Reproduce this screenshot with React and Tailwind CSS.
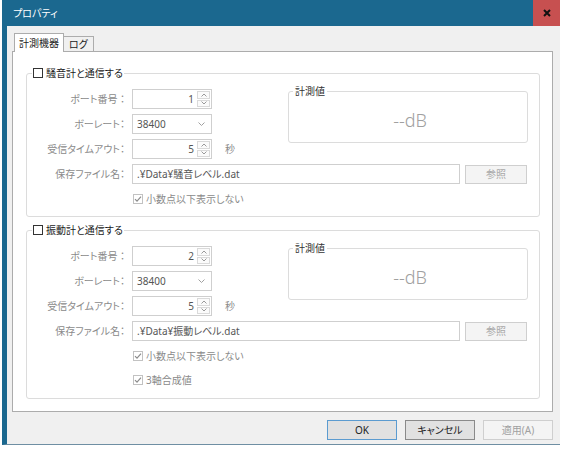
import React from 'react';

const Check = ({ checked, disabled }) => (
  <span
    className={
      'inline-flex w-[10px] h-[10px] items-center justify-center bg-white border ' +
      (disabled ? 'border-[#c2c2c2]' : 'border-[#333333]')
    }
  >
    {checked && (
      <svg width="8" height="8" viewBox="0 0 8 8">
        <polyline points="1,4.2 3,6.2 7,1.6" fill="none" stroke="#8c8c8c" strokeWidth="1.2" />
      </svg>
    )}
  </span>
);

const Label = ({ children }) => (
  <span className="w-[98px] text-right text-[#8a8a8a] whitespace-nowrap">{children}</span>
);

const Spin = ({ value }) => (
  <div className="flex w-[80px] h-[20px] border border-[#cfcfcf] bg-white">
    <span className="flex-1 flex items-center justify-end pr-[3px] text-[#555]">{value}</span>
    <div className="w-[14px] flex flex-col gap-px py-px pr-px">
      <div className="flex-1 flex items-center justify-center border border-[#dadada] bg-[#fbfbfb]">
        <svg width="6" height="4" viewBox="0 0 6 4">
          <polyline points="0.5,3.5 3,1 5.5,3.5" fill="none" stroke="#9a9a9a" strokeWidth="1" />
        </svg>
      </div>
      <div className="flex-1 flex items-center justify-center border border-[#dadada] bg-[#fbfbfb]">
        <svg width="6" height="4" viewBox="0 0 6 4">
          <polyline points="0.5,0.5 3,3 5.5,0.5" fill="none" stroke="#9a9a9a" strokeWidth="1" />
        </svg>
      </div>
    </div>
  </div>
);

const Combo = ({ value }) => (
  <div className="flex items-center justify-between w-[80px] h-[20px] border border-[#cfcfcf] bg-white pl-[4px] pr-[6px] text-[#555]">
    <span>{value}</span>
    <svg width="7" height="4" viewBox="0 0 7 4">
      <polyline points="0.5,0.5 3.5,3.5 6.5,0.5" fill="none" stroke="#a0a0a0" strokeWidth="1" />
    </svg>
  </div>
);

// 計測器ごとのグループ枠
const DeviceGroup = ({ title, port, file, extraChecks, className }) => (
  <fieldset className={'border border-[#dcdcdc] rounded-[3px] pt-[3px] px-0 min-w-0 ' + className}>
    <legend className="ml-[5px] px-[1px] leading-[14px]">
      <span className="inline-flex items-center gap-[3px] h-[14px]">
        <Check />
        <span className="text-[#1a1a1a]">{title}</span>
      </span>
    </legend>

    <div className="flex items-start">
      <div className="flex flex-col gap-[5px] pt-[5px]">
        <div className="flex items-center gap-[7px]">
          <Label>ポート番号 ：</Label>
          <Spin value={port} />
        </div>
        <div className="flex items-center gap-[7px]">
          <Label>ボーレート：</Label>
          <Combo value="38400" />
        </div>
        <div className="flex items-center gap-[7px]">
          <Label>受信タイムアウト：</Label>
          <Spin value="5" />
          <span className="ml-[6px] text-[#8a8a8a]">秒</span>
        </div>
      </div>

      <fieldset className="ml-auto mr-[11px] w-[240px] border border-[#dcdcdc] rounded-[3px] px-0 min-w-0">
        <legend className="ml-[4px] px-[2px] leading-[14px] text-[#333]">計測値</legend>
        <div className="h-[44px] flex items-center justify-center pl-[4px] text-[18px] font-light text-[#a0a0a0]">
          --dB
        </div>
      </fieldset>
    </div>

    <div className="mt-[5px] flex items-center gap-[7px]">
      <Label>保存ファイル名：</Label>
      <div className="w-[328px] h-[20px] flex items-center border border-[#cfcfcf] bg-white pl-[4px] text-[#555]">
        {file}
      </div>
      <button className="ml-[-2px] w-[62px] h-[19px] border border-[#cfcfcf] bg-[#f4f4f4] text-[#a8a8a8]">
        参照
      </button>
    </div>

    <div className="flex flex-col gap-[10px] mt-[8px] ml-[106px]">
      {['小数点以下表示しない', ...extraChecks].map((t) => (
        <div key={t} className="flex items-center gap-[3px] h-[14px]">
          <Check checked disabled />
          <span className="text-[#8a8a8a]">{t}</span>
        </div>
      ))}
    </div>
  </fieldset>
);

export default function App() {
  return (
    <div className="w-[568px] h-[454px] bg-white overflow-hidden text-[10px] font-['Noto_Sans','Noto_Sans_CJK_JP',sans-serif] [font-feature-settings:'palt']">
      <div className="ml-[2px] w-[558px] h-[445px] flex flex-col">
        {/* タイトルバー */}
        <div className="h-[26px] flex bg-[#1b688f]">
          <div className="flex-1 flex items-center pl-[11px] text-white text-[10px]">プロパティ</div>
          <div className="w-[27px] flex items-center justify-center bg-[#c75050]">
            <svg width="8" height="8" viewBox="0 0 8 8">
              <path d="M1 1L7 7M7 1L1 7" stroke="#111" strokeWidth="2" />
            </svg>
          </div>
        </div>

        <div className="flex-1 flex flex-col bg-[#f0f0f0] border-l-[5px] border-l-[#1b688f] border-b border-b-[#6f8fa3] pl-[5px] pr-[7px] pt-[7px]">
          {/* タブ */}
          <div className="flex items-end h-[19px] -mb-px">
            <div className="relative z-10 ml-[2px] h-[19px] flex items-center px-[4px] border border-b-0 border-[#acacac] bg-white text-[#222]">
              計測機器
            </div>
            <div className="h-[16px] flex items-center px-[5px] border border-l-0 border-b-0 border-[#acacac] bg-[#f0f0f0] text-[#222]">
              ログ
            </div>
          </div>

          <div className="border border-[#acacac] bg-white pl-[13px] pr-[12px] pt-[14px] pb-[12px]">
            <DeviceGroup
              title="騒音計と通信する"
              port="1"
              file=".¥Data¥騒音レベル.dat"
              extraChecks={[]}
              className="pb-[10px]"
            />
            <DeviceGroup
              title="振動計と通信する"
              port="2"
              file=".¥Data¥振動レベル.dat"
              extraChecks={['3軸合成値']}
              className="mt-[6px] pb-[11px]"
            />
          </div>

          {/* ボタン */}
          <div className="mt-[8px] flex justify-end gap-[8px]">
            <button className="w-[70px] h-[20px] border border-[#5b9bd0] bg-[#e1e1e1] text-[#222]">OK</button>
            <button className="w-[70px] h-[20px] border border-[#8a8a8a] bg-[#e1e1e1] text-[#222]">キャンセル</button>
            <button className="w-[70px] h-[20px] border border-[#cfcfcf] bg-[#f4f4f4] text-[#a0a0a0]">適用(A)</button>
          </div>
        </div>
      </div>
    </div>
  );
}
